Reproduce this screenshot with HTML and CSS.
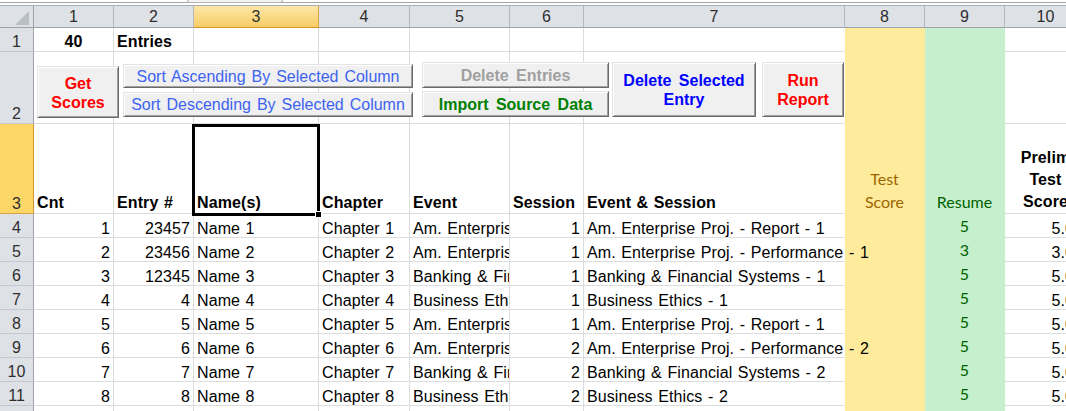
FILE: index.html
```html
<!DOCTYPE html>
<html>
<head>
<meta charset="utf-8">
<link rel="stylesheet" href="styles.css">
</head>
<body>
<div class="page">
  <div class="topbar"><div class="thumb"></div></div>
  <div class="gap"></div>
  <div class="sheet">
    <!-- header row -->
    <div class="ch corner"><svg width="14" height="14" viewBox="0 0 14 14"><polygon points="14,0 14,14 0,14" fill="#b9bec5"/></svg></div>
    <div class="ch">1</div><div class="ch">2</div><div class="ch sel">3</div><div class="ch">4</div><div class="ch">5</div><div class="ch">6</div><div class="ch">7</div><div class="ch">8</div><div class="ch">9</div><div class="ch">10</div>

    <!-- row 1 -->
    <div class="rh">1</div>
    <div class="c ctr b r1">40</div><div class="c b r1">Entries</div><div class="c"></div><div class="c"></div><div class="c"></div><div class="c"></div><div class="c c7"></div><div class="c neutral"></div><div class="c good"></div><div class="c"></div>

    <!-- row 2 -->
    <div class="rh">2</div>
    <div class="c"></div><div class="c"></div><div class="c"></div><div class="c"></div><div class="c"></div><div class="c"></div><div class="c c7"></div><div class="c neutral"></div><div class="c good"></div><div class="c"></div>

    <!-- row 3 -->
    <div class="rh rsel">3</div>
    <div class="c b hd">Cnt</div><div class="c b hd">Entry #</div><div class="c b hd">Name(s)</div><div class="c b hd">Chapter</div><div class="c b hd">Event</div><div class="c b hd">Session</div><div class="c b hd c7">Event &amp; Session</div>
    <div class="c neutral ctr hd wrap cal">Test<br>Score</div><div class="c good ctr hd cal">Resume</div><div class="c b ctr hd wrap prelim">Prelim<br>Test<br>Score</div>

    <!-- data rows -->
    <div class="rh">4</div>
    <div class="c r">1</div><div class="c r">23457</div><div class="c">Name 1</div><div class="c">Chapter 1</div><div class="c">Am. Enterprise Proj.</div><div class="c r">1</div><div class="c c7">Am. Enterprise Proj. - Report - 1</div><div class="c neutral"></div><div class="c good ctr cal">5</div><div class="c r">5.00</div>

    <div class="rh">5</div>
    <div class="c r">2</div><div class="c r">23456</div><div class="c">Name 2</div><div class="c">Chapter 2</div><div class="c">Am. Enterprise Proj.</div><div class="c r">1</div><div class="c c7">Am. Enterprise Proj. - Performance - 1</div><div class="c neutral"></div><div class="c good ctr cal">3</div><div class="c r">3.00</div>

    <div class="rh">6</div>
    <div class="c r">3</div><div class="c r">12345</div><div class="c">Name 3</div><div class="c">Chapter 3</div><div class="c">Banking &amp; Financial Systems</div><div class="c r">1</div><div class="c c7">Banking &amp; Financial Systems - 1</div><div class="c neutral"></div><div class="c good ctr cal">5</div><div class="c r">5.00</div>

    <div class="rh">7</div>
    <div class="c r">4</div><div class="c r">4</div><div class="c">Name 4</div><div class="c">Chapter 4</div><div class="c">Business Ethics</div><div class="c r">1</div><div class="c c7">Business Ethics - 1</div><div class="c neutral"></div><div class="c good ctr cal">5</div><div class="c r">5.00</div>

    <div class="rh">8</div>
    <div class="c r">5</div><div class="c r">5</div><div class="c">Name 5</div><div class="c">Chapter 5</div><div class="c">Am. Enterprise Proj.</div><div class="c r">1</div><div class="c c7">Am. Enterprise Proj. - Report - 1</div><div class="c neutral"></div><div class="c good ctr cal">5</div><div class="c r">5.00</div>

    <div class="rh">9</div>
    <div class="c r">6</div><div class="c r">6</div><div class="c">Name 6</div><div class="c">Chapter 6</div><div class="c">Am. Enterprise Proj.</div><div class="c r">2</div><div class="c c7">Am. Enterprise Proj. - Performance - 2</div><div class="c neutral"></div><div class="c good ctr cal">5</div><div class="c r">5.00</div>

    <div class="rh">10</div>
    <div class="c r">7</div><div class="c r">7</div><div class="c">Name 7</div><div class="c">Chapter 7</div><div class="c">Banking &amp; Financial Systems</div><div class="c r">2</div><div class="c c7">Banking &amp; Financial Systems - 2</div><div class="c neutral"></div><div class="c good ctr cal">5</div><div class="c r">5.00</div>

    <div class="rh">11</div>
    <div class="c r">8</div><div class="c r">8</div><div class="c">Name 8</div><div class="c">Chapter 8</div><div class="c">Business Ethics</div><div class="c r">2</div><div class="c c7">Business Ethics - 2</div><div class="c neutral"></div><div class="c good ctr cal">5</div><div class="c r">5.00</div>

    <div class="rh">12</div>
    <div class="c"></div><div class="c"></div><div class="c"></div><div class="c"></div><div class="c"></div><div class="c"></div><div class="c c7"></div><div class="c neutral"></div><div class="c good"></div><div class="c"></div>
  </div>

  <!-- floating form buttons -->
  <div class="btn btn-get red">Get<br>Scores</div>
  <div class="btn btn-sa sort">Sort Ascending By Selected Column</div>
  <div class="btn btn-sd sort">Sort Descending By Selected Column</div>
  <div class="btn btn-de grey">Delete Entries</div>
  <div class="btn btn-im green">Import Source Data</div>
  <div class="btn btn-ds blue">Delete Selected<br>Entry</div>
  <div class="btn btn-run red">Run<br>Report</div>

  <!-- active cell selection -->
  <div class="selection"></div>
  <div class="handle"></div>
</div>
</body>
</html>
```

FILE: styles.css
```css
* { box-sizing: border-box; }

html, body {
  margin: 0;
  padding: 0;
  background: #fff;
  overflow: hidden;
}

body {
  font-family: "Liberation Sans", Arial, sans-serif;
  font-size: 16px;
  color: #000;
}

.page {
  position: relative;
  width: 1066px;
  height: 411px;
  overflow: hidden;
}

.topbar {
  position: relative;
  height: 3px;
  border-bottom: 1px solid #a3a3a3;
  background: #fff;
}

.thumb {
  position: absolute;
  left: 187px;
  top: 0;
  width: 96px;
  height: 3px;
  background: #f4f4f4;
  border: 1px solid #b4b4b4;
  border-top: none;
  border-radius: 0 0 3px 3px;
}

.gap {
  height: 2px;
  background: #fff;
}

.sheet {
  display: grid;
  grid-template-columns: 34px 80px 80px 125px 91px 100px 74px 261px 80px 80px 82px;
  grid-template-rows: 23px 24px 72px 90px repeat(9, 24px);
  width: 1087px;
}

/* column headers */
.ch {
  background: #dee1e6;
  border-top: 1px solid #a9aeb5;
  border-right: 1px solid #b3b8bf;
  border-bottom: 1px solid #9ea3aa;
  color: #2e2e2e;
  display: flex;
  align-items: center;
  justify-content: center;
  line-height: 21px;
}

.ch.corner {
  justify-content: flex-end;
  align-items: flex-end;
  padding: 0 4px 2px 0;
  border-right-color: #9ea3aa;
}

.ch.sel {
  background: linear-gradient(#fde7a8, #f7cd65);
  border-right-color: #d9a449;
  border-bottom-color: #d9952d;
  color: #2e2e2e;
}

/* row headers */
.rh {
  background: #dee1e6;
  border-right: 1px solid #9ea3aa;
  border-bottom: 1px solid #c4c8ce;
  color: #2e2e2e;
  display: flex;
  align-items: flex-end;
  justify-content: center;
  line-height: 16px;
  padding-bottom: 1px;
}

.rh.rsel {
  background: #fcd768;
  border-right-color: #d9952d;
  border-bottom-color: #d9a449;
}

/* cells */
.c {
  border-right: 1px solid #dadcdd;
  border-bottom: 1px solid #dadcdd;
  display: flex;
  align-items: flex-end;
  justify-content: flex-start;
  padding: 0 3px 0 3px;
  line-height: 16px;
  white-space: nowrap;
  overflow: hidden;
  word-spacing: 1px;
  letter-spacing: 0.1px;
}

.c.r { justify-content: flex-end; }
.c.ctr { justify-content: center; text-align: center; }
.c.b { font-weight: bold; }
.c.r1 { padding-bottom: 1px; }
.c.hd { padding-bottom: 2px; }

.c.c7 {
  overflow: visible;
  position: relative;
  z-index: 2;
  border-right-color: #fff;
}

.c.wrap { white-space: normal; }

.c.neutral {
  background: #ffeb9c;
  color: #9c6500;
  border-right-color: #ffeb9c;
  border-bottom-color: #ffeb9c;
}

.c.good {
  background: #c6efce;
  color: #006100;
  border-right-color: #c6efce;
  border-bottom-color: #c6efce;
}

.c.cal {
  font-family: Lato, "Open Sans", sans-serif;
  font-size: 16px;
  line-height: 23px;
  padding-bottom: 0;
  word-spacing: 0;
  letter-spacing: 0;
}

.c.prelim {
  line-height: 22px;
  padding-bottom: 0;
  word-spacing: 0;
}

/* floating form-control buttons */
.btn {
  position: absolute;
  background: #f0f0f0;
  border: 1px solid;
  border-color: #e3e3e3 #696969 #696969 #e3e3e3;
  box-shadow: inset 1px 1px #ffffff, inset -1px -1px #a0a0a0;
  display: flex;
  align-items: center;
  justify-content: center;
  text-align: center;
  font-weight: bold;
  line-height: 19px;
  word-spacing: 3px;
  white-space: nowrap;
}

.btn.sort {
  font-weight: normal;
  color: #3d63f0;
  word-spacing: 1.5px;
}

.red { color: #ff0000; }
.blue { color: #0000ff; }
.green { color: #008000; }
.grey { color: #a0a0a0; }

.btn-get { left: 37px; top: 66px; width: 82px; height: 52px; padding-top: 1px; }
.btn-sa  { left: 123px; top: 64px; width: 290px; height: 24px; }
.btn-sd  { left: 123px; top: 92px; width: 290px; height: 25px; }
.btn-de  { left: 422px; top: 62px; width: 187px; height: 26px; }
.btn-im  { left: 422px; top: 91px; width: 187px; height: 26px; }
.btn-ds  { left: 612px; top: 62px; width: 144px; height: 55px; }
.btn-run { left: 762px; top: 62px; width: 82px; height: 55px; }

/* active cell */
.selection {
  position: absolute;
  left: 192px;
  top: 124px;
  width: 128px;
  height: 92px;
  border: 3px solid #000;
  z-index: 3;
}

.handle {
  position: absolute;
  left: 315px;
  top: 211px;
  width: 7px;
  height: 7px;
  background: #000;
  border: 1px solid #fff;
  z-index: 4;
}
```
